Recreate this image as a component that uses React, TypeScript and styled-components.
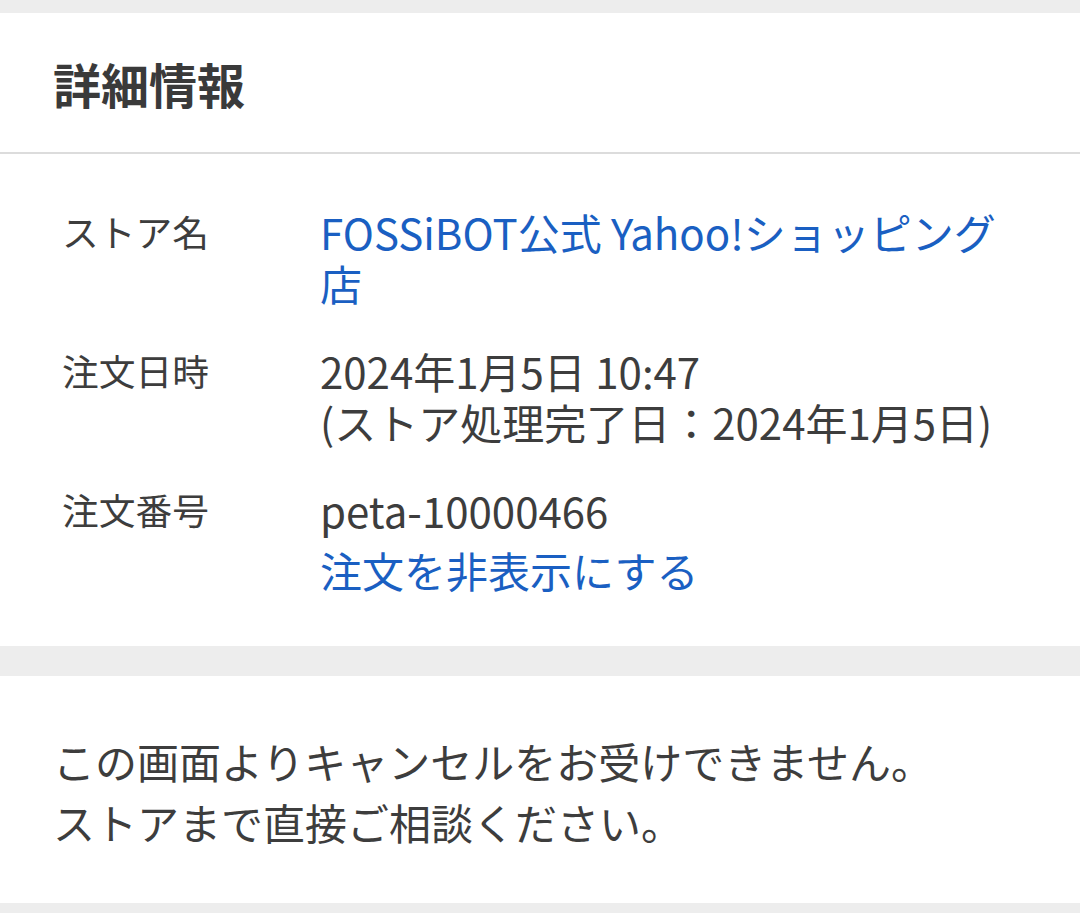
import React from 'react'
import styled, { createGlobalStyle } from 'styled-components'

const GlobalStyle = createGlobalStyle`
  html, body {
    margin: 0;
    padding: 0;
    background: #ededed;
  }
  body {
    font-family: "Noto Sans CJK JP", "Noto Sans", sans-serif;
    color: #333333;
  }
`

const Page = styled.div`
  width: 1080px;
  height: 913px;
  padding-top: 13px;
  box-sizing: border-box;
  background: #ededed;
  display: flex;
  flex-direction: column;
  gap: 30px;
`

const Card = styled.section`
  background: #ffffff;
`

const CardHeader = styled.div`
  height: 141px;
  padding: 2px 53px 0;
  box-sizing: border-box;
  display: flex;
  align-items: center;
  border-bottom: 2px solid #dcdcdc;
`

const Title = styled.h2`
  margin: 0;
  font-size: 48px;
  font-weight: 700;
  line-height: 1.2;
  color: #3a3a3a;
`

const DetailList = styled.dl`
  margin: 0;
  padding: 52px 70px 51px 62px;
  display: flex;
  flex-direction: column;
  gap: 37px;
`

const Row = styled.div`
  display: grid;
  grid-template-columns: 258px 1fr;
`

const Label = styled.dt`
  margin: 0;
  font-size: 36.75px;
  line-height: 51px;
  color: #3d3d3d;
`

const Value = styled.dd`
  margin: 0;
  font-size: 42px;
  line-height: 51px;
  color: #3d3d3d;
`

const Line = styled.div``

const Link = styled.a<{ $spaced?: boolean }>`
  display: block;
  color: #1a5fc2;
  text-decoration: none;
  margin-top: ${(p) => (p.$spaced ? '9px' : '0')};
`

const Notice = styled.p`
  margin: 0;
  padding: 54px 53px 51px;
  font-size: 42px;
  line-height: 61px;
  color: #3d3d3d;
`

const App = () => {
  return (
    <>
      <GlobalStyle />
      <Page>
        <Card>
          <CardHeader>
            <Title>詳細情報</Title>
          </CardHeader>
          <DetailList>
            <Row>
              <Label>ストア名</Label>
              <Value>
                <Link href="#">FOSSiBOT公式 Yahoo!ショッピング店</Link>
              </Value>
            </Row>
            <Row>
              <Label>注文日時</Label>
              <Value>
                <Line>2024年1月5日 10:47</Line>
                <Line>(ストア処理完了日：2024年1月5日)</Line>
              </Value>
            </Row>
            <Row>
              <Label>注文番号</Label>
              <Value>
                <Line>peta-10000466</Line>
                <Link href="#" $spaced>
                  注文を非表示にする
                </Link>
              </Value>
            </Row>
          </DetailList>
        </Card>
        <Card>
          <Notice>
            この画面よりキャンセルをお受けできません。
            <br />
            ストアまで直接ご相談ください。
          </Notice>
        </Card>
      </Page>
    </>
  )
}

export default App
